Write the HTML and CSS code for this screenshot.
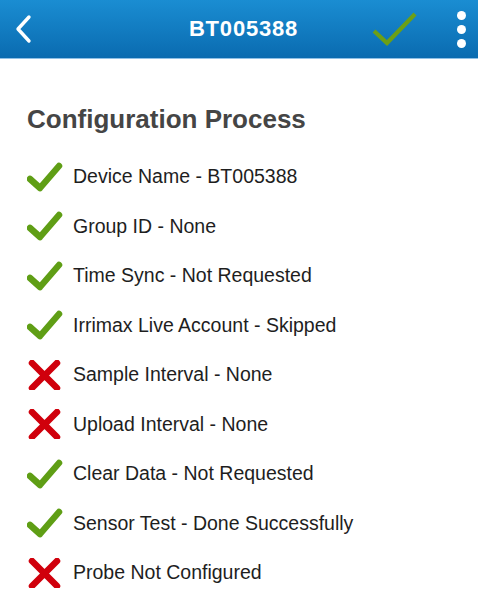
FILE: index.html
```html
<!doctype html>
<html>
<head>
    <link rel="stylesheet" href="styles.css">
    <title>BT005388</title>
</head>
<body>
    <div class="topbar">
        <svg class="back" width="20" height="30" viewBox="0 0 20 30"><path d="M16 3 L5 15 L16 27" fill="none" stroke="#fff" stroke-width="3.4" stroke-linecap="round" stroke-linejoin="round"/></svg>
        <span class="title">BT005388</span>
        <svg class="done" width="46" height="36" viewBox="0 0 46 36"><path d="M2 20 L15 32 L43 3" fill="none" stroke="#6c9f16" stroke-width="4.2"/></svg>
        <div class="dots"><span></span><span></span><span></span></div>
    </div>
    <div class="content">
        <p class="header">Configuration Process</p>
        <div class="steps">
            <div class="step"><svg class="ok" width="36" height="30" viewBox="0 0 36 30"><path d="M3 17 L13 26 L32 4" fill="none" stroke="#5f9e15" stroke-width="6.5" stroke-linecap="round" stroke-linejoin="round"/></svg><span>Device Name - BT005388</span></div>
            <div class="step"><svg class="ok" width="36" height="30" viewBox="0 0 36 30"><path d="M3 17 L13 26 L32 4" fill="none" stroke="#5f9e15" stroke-width="6.5" stroke-linecap="round" stroke-linejoin="round"/></svg><span>Group ID - None</span></div>
            <div class="step"><svg class="ok" width="36" height="30" viewBox="0 0 36 30"><path d="M3 17 L13 26 L32 4" fill="none" stroke="#5f9e15" stroke-width="6.5" stroke-linecap="round" stroke-linejoin="round"/></svg><span>Time Sync - Not Requested</span></div>
            <div class="step"><svg class="ok" width="36" height="30" viewBox="0 0 36 30"><path d="M3 17 L13 26 L32 4" fill="none" stroke="#5f9e15" stroke-width="6.5" stroke-linecap="round" stroke-linejoin="round"/></svg><span>Irrimax Live Account - Skipped</span></div>
            <div class="step"><svg class="bad" width="36" height="30" viewBox="0 0 36 30"><path d="M5 3 L30 28 M30 3 L5 28" fill="none" stroke="#d0000c" stroke-width="6.5" stroke-linecap="round"/></svg><span>Sample Interval - None</span></div>
            <div class="step"><svg class="bad" width="36" height="30" viewBox="0 0 36 30"><path d="M5 3 L30 28 M30 3 L5 28" fill="none" stroke="#d0000c" stroke-width="6.5" stroke-linecap="round"/></svg><span>Upload Interval - None</span></div>
            <div class="step"><svg class="ok" width="36" height="30" viewBox="0 0 36 30"><path d="M3 17 L13 26 L32 4" fill="none" stroke="#5f9e15" stroke-width="6.5" stroke-linecap="round" stroke-linejoin="round"/></svg><span>Clear Data - Not Requested</span></div>
            <div class="step"><svg class="ok" width="36" height="30" viewBox="0 0 36 30"><path d="M3 17 L13 26 L32 4" fill="none" stroke="#5f9e15" stroke-width="6.5" stroke-linecap="round" stroke-linejoin="round"/></svg><span>Sensor Test - Done Successfully</span></div>
            <div class="step"><svg class="bad" width="36" height="30" viewBox="0 0 36 30"><path d="M5 3 L30 28 M30 3 L5 28" fill="none" stroke="#d0000c" stroke-width="6.5" stroke-linecap="round"/></svg><span>Probe Not Configured</span></div>
        </div>
    </div>
</body>
</html>
```

FILE: styles.css
```css
body {
    margin: 0;
    background-color: #fff;
    font-family: 'Liberation Sans', Arial, sans-serif;
}
.topbar {
    height: 58px;
    display: flex;
    align-items: center;
    padding: 0 12px 0 13px;
    background: linear-gradient(#1a8dd2, #0a6bb0);
    border-bottom: 1px solid #8fc0e6;
}
.back {
    flex: none;
}
.title {
    flex: 1;
    text-align: center;
    color: #fff;
    font-size: 22px;
    font-weight: bold;
    letter-spacing: 0.8px;
    padding-left: 82px;
}
.done {
    flex: none;
    margin: 0 39px 0 0;
}
.dots {
    display: flex;
    flex-direction: column;
    gap: 5px;
}
.dots span {
    width: 9px;
    height: 9px;
    border-radius: 50%;
    background: #fff;
}
.content {
    padding: 0 0 0 27px;
}
.header {
    margin: 45px 0 17px 0;
    font-size: 26px;
    font-weight: bold;
    color: #454545;
}
.steps {
    display: flex;
    flex-direction: column;
}
.step {
    height: 49.5px;
    display: flex;
    align-items: center;
    gap: 10px;
    font-size: 19.5px;
    color: #1e1e1e;
}
.step svg {
    flex: none;
}
```
